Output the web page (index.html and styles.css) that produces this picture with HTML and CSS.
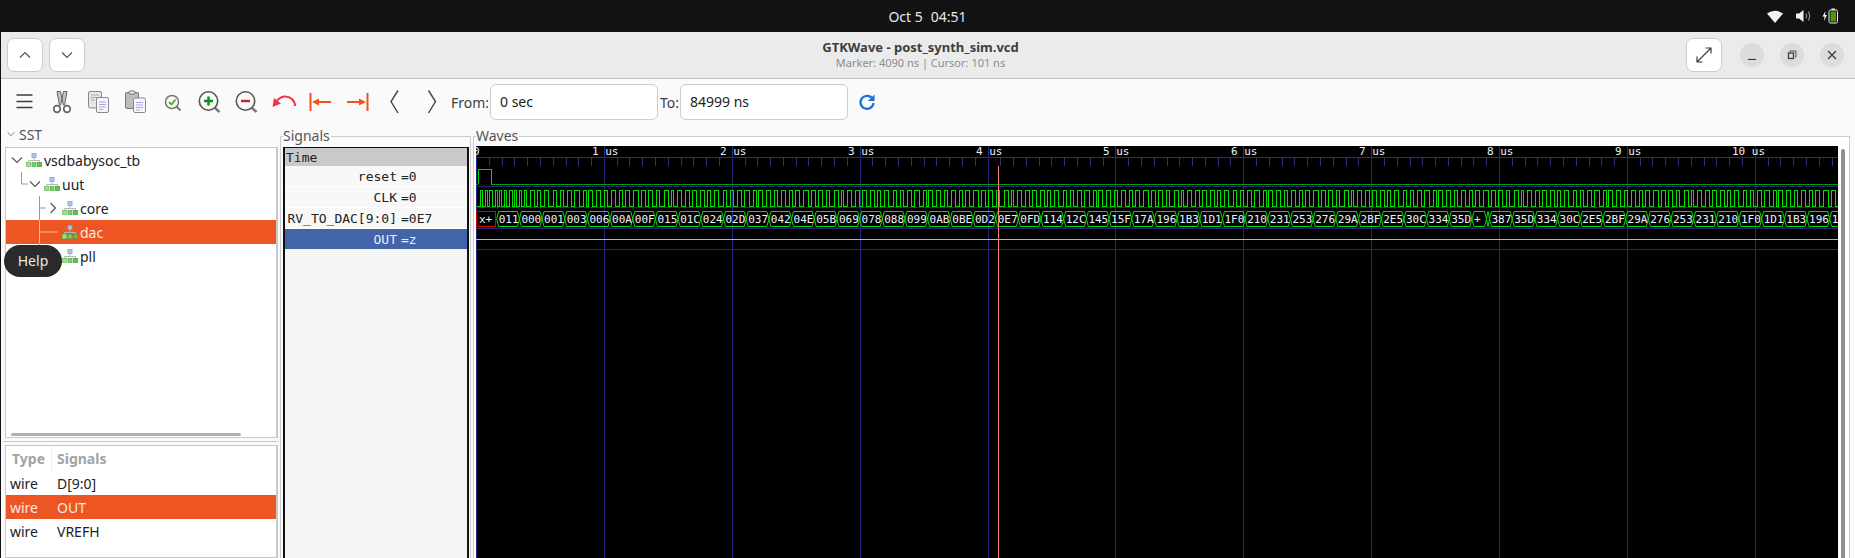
FILE: index.html
```html
<!DOCTYPE html>
<html lang="en">
<head>
  <meta charset="UTF-8" />
  <title>GTKWave - post_synth_sim.vcd</title>
  <link rel="stylesheet" href="styles.css">
</head>
<body>
  <svg class="defs" width="0" height="0">
    <symbol id="scope" viewBox="0 0 16 14">
      <rect x="6" y="0.5" width="4" height="4" fill="#a9c6ee" stroke="#7ea3d8" stroke-width="0.8"/>
      <path d="M8 5v2M2.5 9V7.5h11V9" fill="none" stroke="#b5b5b5" stroke-width="1"/>
      <rect x="0.5" y="9.5" width="4" height="4" fill="#a8dc9c" stroke="#74bf66" stroke-width="0.8"/>
      <rect x="6" y="9.5" width="4" height="4" fill="#7fcb70" stroke="#5bae4e" stroke-width="0.8"/>
      <rect x="11.5" y="9.5" width="4" height="4" fill="#6bbd5c" stroke="#4f9e43" stroke-width="0.8"/>
    </symbol>
    <symbol id="chev-down" viewBox="0 0 12 8"><path d="M1 1.5l5 5 5-5" fill="none" stroke="#555" stroke-width="1.2"/></symbol>
  </svg>

  <div class="topbar">
    <div></div>
    <div class="clock"><span>Oct 5</span><span>04:51</span></div>
    <div class="status">
      <svg width="16" height="13" viewBox="0 0 16 13"><path d="M0 3.5Q8-2 16 3.5L8 13Z" fill="#f4f4f4"/></svg>
      <svg width="15" height="14" viewBox="0 0 15 14"><path d="M0 4.5h3L7.5 1v12L3 9.500H0Z" fill="#f0f0f0"/><path d="M10 4.500q1.500 2.500 0 5M12.500 2.500q2.500 4.500 0 9" fill="none" stroke="#aaa" stroke-width="1"/></svg>
      <svg class="battery" width="16" height="16" viewBox="0 0 16 16"><path d="M3.500 3L0.500 8.500h2l-.5 4.500 3-6h-2Z" fill="#f0f0f0"/><rect x="7" y="2" width="8.500" height="13" rx="1.500" fill="none" stroke="#eee" stroke-width="1"/><rect x="9.500" y="0.500" width="3.500" height="1.500" fill="#eee"/><rect x="8.500" y="3.500" width="5.500" height="10" fill="#4e9a06"/></svg>
    </div>
  </div>

  <div class="window">
    <header class="titlebar">
      <div class="title-left">
        <button class="head-btn"><svg width="12" height="8" viewBox="0 0 12 8"><path d="M1 6.500l5-5 5 5" fill="none" stroke="#555" stroke-width="1.200"/></svg></button>
        <button class="head-btn"><svg width="12" height="8"><use href="#chev-down"/></svg></button>
      </div>
      <div class="title-mid">
        <div class="title-main">GTKWave - post_synth_sim.vcd</div>
        <div class="title-sub">Marker: 4090 ns | Cursor: 101 ns</div>
      </div>
      <div class="title-right">
        <button class="head-btn expand"><svg width="16" height="16" viewBox="0 0 16 16"><path d="M1 15L15 1M9.500 1H15V6.500M1 9.500V15H6.500" fill="none" stroke="#3d3d3d" stroke-width="1.200"/></svg></button>
        <div class="win-btns">
          <span class="win-btn"><svg width="10" height="10" viewBox="0 0 10 10"><path d="M1 9.500h8" stroke="#3d3d3d" stroke-width="1.200"/></svg></span>
          <span class="win-btn"><svg width="10" height="10" viewBox="0 0 10 10"><path d="M3 2V1h6v6H8" fill="none" stroke="#555" stroke-width="1"/><rect x="1.500" y="3" width="5" height="5.500" fill="none" stroke="#3d3d3d" stroke-width="1.300"/></svg></span>
          <span class="win-btn"><svg width="10" height="10" viewBox="0 0 10 10"><path d="M1 1l8 8M9 1l-8 8" stroke="#3d3d3d" stroke-width="1.300"/></svg></span>
        </div>
      </div>
    </header>

    <div class="toolbar">
      <span class="tool"><svg width="24" height="24"><path d="M3.500 5h16M3.500 11.500h16M3.500 17.500h16" stroke="#3d3d3d" stroke-width="1.500"/></svg></span>
      <span class="tool"><svg width="24" height="24">
        <path d="M9.500 15.500L7 1.500l3.500 0 3 14M14.500 15.500L17 1.500l-3.500 0-3 14" fill="#c4c4c4" stroke="#666" stroke-width="1"/>
        <circle cx="7" cy="19" r="3.300" fill="#fff" stroke="#666" stroke-width="1.700"/><circle cx="17" cy="19" r="3.300" fill="#fff" stroke="#666" stroke-width="1.700"/>
      </svg></span>
      <span class="tool"><svg width="24" height="24">
        <rect x="1.500" y="1.500" width="13" height="16.500" rx="1.500" fill="#e6e6e6" stroke="#888"/>
        <path d="M4 5h8M4 7.500h8M4 10h4" stroke="#aaa"/>
        <rect x="9.500" y="7.500" width="12" height="15" rx="1.500" fill="#f6f6fc" stroke="#888"/>
        <path d="M12 12h7M12 14.500h7M12 17h7M12 19.500h4" stroke="#a0a8e8"/>
      </svg></span>
      <span class="tool"><svg width="24" height="24">
        <rect x="1.500" y="2.500" width="13" height="16" rx="1.500" fill="#bdbdbd" stroke="#777"/>
        <rect x="5" y="1" width="6" height="3" rx="1" fill="#eee" stroke="#777"/>
        <rect x="9.500" y="8" width="12" height="14.500" rx="1.500" fill="#f6f6fc" stroke="#888"/>
        <path d="M12 12.500h7M12 15h7M12 17.500h7M12 20h4" stroke="#a0a8e8"/>
      </svg></span>
      <span class="tool"><svg width="24" height="24">
        <path d="M15.500 16.500l4 4" stroke="#777" stroke-width="2"/>
        <circle cx="11" cy="12" r="6.500" fill="#fbfbf6" stroke="#777" stroke-width="1.500"/>
        <path d="M8 12l2.500 2.500L14.500 9.500" fill="none" stroke="#3fae2a" stroke-width="1.800"/>
      </svg></span>
      <span class="tool"><svg width="24" height="24">
        <path d="M16.500 17.500l5 4.500" stroke="#777" stroke-width="2.400"/>
        <circle cx="10.500" cy="11" r="9.200" fill="#fbfbf6" stroke="#555" stroke-width="1.600"/>
        <path d="M6 11h9M10.500 6.500v9" stroke="#0a8a20" stroke-width="2.400"/>
      </svg></span>
      <span class="tool"><svg width="24" height="24">
        <path d="M16.500 17.500l5 4.500" stroke="#777" stroke-width="2.400"/>
        <circle cx="10.500" cy="11" r="9.200" fill="#fbfbf6" stroke="#555" stroke-width="1.600"/>
        <path d="M6 11h9" stroke="#c81e3a" stroke-width="2.400"/>
      </svg></span>
      <span class="tool"><svg width="24" height="24">
        <path d="M23 16C23 10 18 6.500 13 6.500C10 6.500 7.500 8 5 10.500" fill="none" stroke="#f0304a" stroke-width="2"/>
        <path d="M0.500 17L2 8l7 5.500Z" fill="#f0304a"/>
      </svg></span>
      <span class="tool"><svg width="24" height="24">
        <path d="M1.500 3v18" stroke="#f4511e" stroke-width="2"/>
        <path d="M7 12h15" stroke="#f4511e" stroke-width="2"/>
        <path d="M3 12l7-3.500v7Z" fill="#f4511e"/>
      </svg></span>
      <span class="tool"><svg width="24" height="24">
        <path d="M21.500 3v18" stroke="#f4511e" stroke-width="2"/>
        <path d="M1 12h15" stroke="#f4511e" stroke-width="2"/>
        <path d="M20 12l-7-3.500v7Z" fill="#f4511e"/>
      </svg></span>
      <span class="tool"><svg width="24" height="24"><path d="M15 0.500L8 11.500 15 23" fill="none" stroke="#444" stroke-width="1.400"/></svg></span>
      <span class="tool"><svg width="24" height="24"><path d="M8.500 0.500L15.500 11.500 8.500 23" fill="none" stroke="#444" stroke-width="1.400"/></svg></span>
      <label class="range-label from">From:</label>
      <div class="range-input">0 sec</div>
      <label class="range-label to">To:</label>
      <div class="range-input">84999 ns</div>
      <span class="refresh"><svg width="18" height="18" viewBox="0 0 18 18"><path d="M14.600 6A6.500 6.500 0 1 0 15.500 10" fill="none" stroke="#1c71d8" stroke-width="2.300"/><path d="M16.500 1.500V8H10Z" fill="#1c71d8"/></svg></span>
    </div>

    <main class="panes">
      <section class="sst">
        <div class="sst-head"><svg width="8" height="6"><use href="#chev-down"/></svg><span>SST</span></div>
        <div class="box tree-box">
          <svg class="tree-lines" width="70" height="120">
            <path d="M10.500 24V36H17" fill="none" stroke="#9a9a9a"/>
            <path d="M28.500 48V72M28.500 96V120M28.500 60H35" fill="none" stroke="#9a9a9a"/>
            <path d="M28.500 72V96M28.500 84H47" fill="none" stroke="#f4b79c"/>
          </svg>
          <div class="tree-row lvl0"><svg class="twist" width="12" height="8"><use href="#chev-down"/></svg><svg class="scope" width="16" height="14"><use href="#scope"/></svg><span>vsdbabysoc_tb</span></div>
          <div class="tree-row lvl1"><svg class="twist" width="12" height="8"><use href="#chev-down"/></svg><svg class="scope" width="16" height="14"><use href="#scope"/></svg><span>uut</span></div>
          <div class="tree-row lvl2"><svg class="twist" width="12" height="12" viewBox="0 0 12 12"><path d="M3.500 1l5 5-5 5" fill="none" stroke="#555" stroke-width="1.200"/></svg><svg class="scope" width="16" height="14"><use href="#scope"/></svg><span>core</span></div>
          <div class="tree-row lvl2 active"><span class="twist"></span><svg class="scope" width="16" height="14"><use href="#scope"/></svg><span>dac</span></div>
          <div class="tree-row lvl2"><span class="twist"></span><svg class="scope" width="16" height="14"><use href="#scope"/></svg><span>pll</span></div>
          <div class="hscroll"></div>
          <div class="tooltip">Help</div>
        </div>
        <div class="sst-split"></div>
        <div class="box signal-box">
          <div class="sig-head"><span class="col-type">Type</span><span class="col-name">Signals</span></div>
          <div class="sig-row"><span class="col-type">wire</span><span class="col-name">D[9:0]</span></div>
          <div class="sig-row active"><span class="col-type">wire</span><span class="col-name">OUT</span></div>
          <div class="sig-row"><span class="col-type">wire</span><span class="col-name">VREFH</span></div>
        </div>
      </section>

      <section class="frame signals">
        <span class="frame-label">Signals</span>
        <div class="signal-list">
          <div class="time-row">Time</div>
          <div class="trace-row"><span class="trace-name">reset</span><span class="trace-val">=0</span></div>
          <div class="trace-row"><span class="trace-name">CLK</span><span class="trace-val">=0</span></div>
          <div class="trace-row"><span class="trace-name">RV_TO_DAC[9:0]</span><span class="trace-val">=0E7</span></div>
          <div class="trace-row active"><span class="trace-name">OUT</span><span class="trace-val">=z</span></div>
        </div>
      </section>

      <section class="frame waves">
        <span class="frame-label">Waves</span>
        <svg id="wave" class="wave-canvas" width="1362" height="412"></svg>
        <div class="vscroll"><div class="vthumb"></div></div>
      </section>
    </main>
  </div>

  <script src="wave.js"></script>
</body>
</html>
```

FILE: styles.css
```css
* {
  box-sizing: border-box;
}
html, body {
  height: 100%;
}
body {
  margin: 0;
  background: #121212;
  font-family: "Noto Sans", sans-serif;
  font-size: 14px;
  color: #222;
  display: flex;
  flex-direction: column;
  overflow: hidden;
}
svg {
  display: block;
}
.defs {
  position: absolute;
}
button {
  font: inherit;
  padding: 0;
}

/* top bar */
.topbar {
  height: 32px;
  flex: none;
  display: grid;
  grid-template-columns: 1fr auto 1fr;
  align-items: center;
  color: #e6e6e6;
}
.clock {
  display: flex;
  gap: 8px;
  font-size: 14px;
}
.status {
  display: flex;
  align-items: center;
  justify-content: flex-end;
  gap: 13px;
  padding-right: 17px;
}
.battery {
  margin-left: -2px;
}

/* window */
.window {
  flex: 1;
  min-height: 0;
  margin-left: 1px;
  background: #fafafa;
  display: flex;
  flex-direction: column;
}
.titlebar {
  height: 47px;
  flex: none;
  background: #ebebeb;
  border-bottom: 1px solid #c0c0c0;
  display: grid;
  grid-template-columns: 1fr auto 1fr;
  align-items: center;
  padding: 0 11px 0 6px;
}
.title-left {
  display: flex;
  gap: 6px;
}
.head-btn {
  width: 36px;
  height: 34px;
  background: #fff;
  border: 1px solid #ccc;
  border-radius: 7px;
  display: flex;
  align-items: center;
  justify-content: center;
}
.title-mid {
  text-align: center;
  line-height: 16px;
  margin-right: 10px;
}
.title-main {
  font-weight: 700;
  font-size: 13px;
  color: #3d3d3d;
}
.title-sub {
  font-size: 11px;
  color: #8c8c8c;
}
.title-right {
  display: flex;
  align-items: center;
  justify-content: flex-end;
  gap: 18px;
}
.win-btns {
  display: flex;
  gap: 16px;
}
.win-btn {
  width: 24px;
  height: 24px;
  border-radius: 50%;
  background: #dcdcdc;
  display: flex;
  align-items: center;
  justify-content: center;
}

/* toolbar */
.toolbar {
  height: 46px;
  flex: none;
  display: flex;
  align-items: center;
  padding-left: 5px;
}
.tool {
  width: 37px;
  height: 24px;
  display: flex;
  justify-content: center;
}
.range-label {
  color: #3d3d3d;
}
.from {
  width: 40px;
  padding-left: 1px;
}
.to {
  width: 22px;
  padding-left: 2px;
}
.range-input {
  width: 168px;
  height: 36px;
  background: #fff;
  border: 1px solid #ccc;
  border-radius: 6px;
  padding-left: 9px;
  line-height: 34px;
}
.refresh {
  margin-left: 10px;
}

/* panes */
.panes {
  flex: 1;
  min-height: 0;
  display: flex;
}
.sst {
  width: 279px;
  flex: none;
  display: flex;
  flex-direction: column;
  padding-left: 4px;
}
.sst-head {
  height: 22px;
  flex: none;
  display: flex;
  align-items: center;
  gap: 4px;
  padding: 0 0 4px 2px;
  color: #555;
}
.box {
  border: 1px solid #c8c8c8;
  border-right-width: 2px;
  background: #fff;
  width: 273px;
}
.tree-box {
  position: relative;
  height: 291px;
  flex: none;
}
.tree-lines {
  position: absolute;
  left: 5px;
  top: 0;
  z-index: 1;
}
.tree-row {
  height: 24px;
  display: flex;
  align-items: center;
  gap: 2px;
  position: relative;
}
.tree-row .scope {
  position: relative;
  z-index: 2;
}
.tree-row span:last-child {
  position: relative;
  z-index: 2;
}
.twist {
  width: 12px;
  flex: none;
  margin-right: 1px;
}
.lvl0 {
  padding-left: 5px;
}
.lvl1 {
  padding-left: 23px;
}
.lvl2 {
  padding-left: 41px;
}
.active {
  background: #ed5623;
  color: #fbe9e0;
}
.hscroll {
  position: absolute;
  left: 5px;
  bottom: 1px;
  width: 230px;
  height: 3px;
  border-radius: 2px;
  background: #b0b0b0;
}
.tooltip {
  position: absolute;
  left: -2px;
  top: 97px;
  width: 58px;
  height: 32px;
  border-radius: 16px;
  background: #2a2a2a;
  color: #e8e8e8;
  text-align: center;
  line-height: 32px;
  z-index: 3;
}
.sst-split {
  height: 4px;
  flex: none;
  margin-left: -2px;
  border-top: 1px solid #c8c8c8;
  margin-top: 3px;
  width: 276px;
}
.signal-box {
  flex: 1;
}
.sig-head, .sig-row {
  display: flex;
  align-items: center;
  height: 24px;
}
.sig-head {
  height: 25px;
  font-weight: 700;
  color: #a3a3a3;
}
.col-type {
  width: 50px;
  padding-left: 4px;
}
.sig-head .col-type {
  width: 46px;
  border-right: 1px solid #eee;
  padding-left: 6px;
  line-height: 24px;
}
.col-name {
  padding-left: 1px;
}
.sig-head .col-name {
  padding-left: 5px;
}

/* frames */
.frame {
  position: relative;
  margin-top: 11px;
  border: 1px solid #ccc;
  border-bottom: none;
}
.frame-label {
  position: absolute;
  top: -10px;
  left: 2px;
  line-height: 18px;
  padding-right: 1px;
  background: #fafafa;
  color: #555;
}
.signals {
  width: 191px;
  flex: none;
  padding: 10px 0 0 2px;
}
.signal-list {
  width: 186px;
  height: 100%;
  background: #f5f5f5;
  border: 2px solid #111;
  border-top-width: 1px;
  border-bottom: none;
  font-family: "DejaVu Sans Mono", monospace;
  font-size: 13px;
}
.time-row {
  height: 18px;
  line-height: 20px;
  background: #c9c9c9;
  padding-left: 1px;
}
.trace-row {
  height: 21px;
  line-height: 22px;
  display: flex;
  padding-left: 1px;
  background: #f8f8f8;
  border-bottom: 1px solid #fff;
}
.trace-name {
  width: 111px;
  text-align: right;
  margin-right: 4px;
}
.trace-row.active {
  background: #4464a8;
  color: #e8edf6;
  border-bottom: none;
  height: 20px;
}
.waves {
  width: 1377px;
  flex: none;
  margin-left: 2px;
  background: #fff;
  padding: 9px 0 0 2px;
  display: flex;
  align-items: flex-start;
}
.wave-canvas {
  flex: none;
  background: #000;
}
.wave-canvas text {
  font-family: "DejaVu Sans Mono", monospace;
  font-size: 11px;
  fill: #eef2fb;
}
.vscroll {
  width: 10px;
  padding: 3px 0 0 3px;
  align-self: stretch;
}
.vthumb {
  width: 4px;
  height: 100%;
  background: #8f8f8f;
  border-radius: 2px 2px 0 0;
}
```

FILE: wave.js
```js
// draws the traces; x/y below are page pixels, the canvas starts at 477,146
const ORIGIN_X = 477;
const ORIGIN_Y = 146;
const NS = "http://www.w3.org/2000/svg";
const svg = document.getElementById("wave");
const US = 127.88;
const NAVY = "#26267e";

function x(v) { return v - ORIGIN_X; }
function y(v) { return v - ORIGIN_Y; }

function add(tag, attrs, text) {
  const el = document.createElementNS(NS, tag);
  for (const k in attrs) el.setAttribute(k, attrs[k]);
  if (text) el.textContent = text;
  svg.appendChild(el);
  return el;
}

function hline(py, color, from, to) {
  add("path", { d: `M${x(from || ORIGIN_X)} ${y(py) + 0.5}H${x(to || 1839)}`, stroke: color, "shape-rendering": "crispEdges" });
}

// grid + time ruler
const ticks = [];
for (let i = 0; i <= 11; i++) {
  const major = Math.round(ORIGIN_X + i * US);
  add("path", { d: `M${x(major) + 0.5} 0V412`, stroke: NAVY, "shape-rendering": "crispEdges" });
  for (let k = 1; k < 10; k++) {
    const t = Math.round(ORIGIN_X + (i + k / 10) * US);
    ticks.push(`M${x(t) + 0.5} ${y(158)}V${y(166)}`);
  }
  if (i === 0) add("text", { x: -3, y: 9 }, "0");
  else if (i <= 10) add("text", { x: x(major) - (i > 9 ? 23 : 12), y: 9 }, `${i} us`);
}
add("path", { d: ticks.join(""), stroke: "#30307e", "shape-rendering": "crispEdges" });
hline(157, "#2c2c88");
hline(186, NAVY);
hline(207, NAVY);
hline(228, NAVY);
hline(249, NAVY);

// reset
add("path", {
  d: `M${x(479) + 0.5} ${y(184)}V${y(169) + 0.5}H${x(492) + 0.5}V${y(184)}`,
  fill: "none", stroke: "#00d800", "shape-rendering": "crispEdges"
});
hline(184, "#00a000", 477, 479);
hline(184, "#00a000", 492);

// CLK, aliased: the pulse widths wobble a little
const dense = [3, 2, 3, 2, 2, 3, 3, 2, 2, 2, 3, 2, 3, 3, 2, 2, 3, 2, 3, 2];
const wobble = [4, 4, 3, 3, 4, 4, 5, 3, 4, 3, 4, 4, 3, 5, 4, 3, 2, 4, 4, 4, 4, 3, 4];
const edges = [];
let pos = 478;
for (const w of dense) { pos += w; edges.push(pos); }
for (let i = 0; pos < 1838; i++) {
  pos += wobble[i % wobble.length];
  edges.push(pos);
}
let d = `M${x(478)} ${y(206) + 0.5}`;
let high = false;
for (const e of edges) {
  d += `H${x(e) + 0.5}V${y(high ? 206 : 190) + 0.5}`;
  high = !high;
}
add("path", { d: d, fill: "none", stroke: "#00e000", "shape-rendering": "crispEdges" });

// RV_TO_DAC bus
const TOP = y(211) + 0.5;
const BOT = y(226) + 0.5;
const MID = (TOP + BOT) / 2;
const STEP = 22.68;
const first = ["011","000","001","003","006","00A","00F","015","01C","024","02D","037","042","04E","05B","069","078","088","099","0AB","0BE","0D2","0E7","0FD","114","12C","145","15F","17A","196","1B3","1D1","1F0","210","231","253","276","29A","2BF","2E5","30C","334","35D"];
const second = ["387","35D","334","30C","2E5","2BF","29A","276","253","231","210","1F0","1D1","1B3","196","17A"];

function segment(from, to, label) {
  const a = x(from), b = x(to);
  const s = Math.min(2, (b - a) / 2);
  add("path", {
    d: `M${a} ${MID}L${a + s} ${TOP}H${b - s}L${b} ${MID}L${b - s} ${BOT}H${a + s}Z`,
    fill: "none", stroke: "#00e000"
  });
  if (label) add("text", { x: a + 2, y: y(222.5) }, label);
}

add("rect", { x: 0.5, y: TOP, width: 19, height: BOT - TOP, fill: "none", stroke: "#e00000", "shape-rendering": "crispEdges" });
add("text", { x: 3, y: y(222.5) }, "x+");

first.forEach((label, i) => {
  segment(497.7 + i * STEP, 497.7 + (i + 1) * STEP, label);
});
const endFirst = 497.7 + first.length * STEP;
segment(endFirst, 1487.5, "+");
segment(1487.5, 1490.5, "");
second.forEach((label, i) => {
  segment(1490.5 + i * STEP, 1490.5 + (i + 1) * STEP, label);
});

// OUT = z
hline(239, "#d8c800");

// marker
add("path", { d: `M${x(999) + 0.5} ${y(166)}V412`, stroke: "#f4837a", "shape-rendering": "crispEdges" });
```
